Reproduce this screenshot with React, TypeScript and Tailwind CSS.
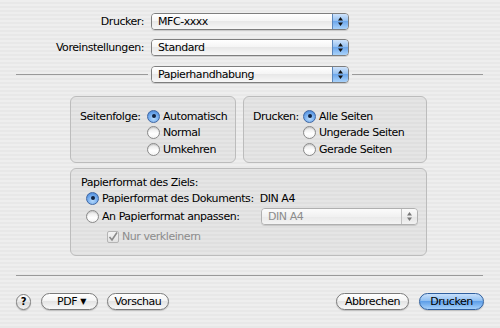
import React from "react";

const Arrows = ({ dim }: { dim?: boolean }) => (
  <svg width="7" height="11" viewBox="0 0 7 11">
    <path d="M3.5 1 L6 4.5 L1 4.5 Z" fill={dim ? "#777" : "#111"} />
    <path d="M3.5 10 L6 6.5 L1 6.5 Z" fill={dim ? "#777" : "#111"} />
  </svg>
);

const Popup = ({ text, w, disabled }: { text: string; w: string; disabled?: boolean }) => (
  <div
    className={`flex h-[17px] ${w} rounded-[4px] border ${
      disabled ? "border-[#b0b0b0]" : "border-[#7e7e7e]"
    } overflow-hidden shadow-[0_1px_0_rgba(0,0,0,0.12)]`}
  >
    <div
      className={`flex-1 flex items-center pl-[6px] ${
        disabled
          ? "text-[#8c8c8c] bg-[linear-gradient(to_bottom,#fbfbfb,#f1f1f1_50%,#e9e9e9_50%,#f4f4f4)]"
          : "text-black bg-[linear-gradient(to_bottom,#ffffff,#f4f4f4_50%,#e8e8e8_50%,#f7f7f7)]"
      }`}
    >
      {text}
    </div>
    <div
      className={`w-[16px] flex items-center justify-center border-l ${
        disabled
          ? "border-[#c0c0c0] bg-[linear-gradient(to_bottom,#fbfbfb,#eeeeee_50%,#e4e4e4_50%,#f2f2f2)]"
          : "border-[#5b86bb] bg-[linear-gradient(to_bottom,#cfe3fb,#8fbdf0_50%,#6ea8ec_50%,#a9d2fa)]"
      }`}
    >
      <Arrows dim={disabled} />
    </div>
  </div>
);

const Radio = ({ on }: { on?: boolean }) =>
  on ? (
    <div className="w-[13px] h-[13px] rounded-full border border-[#3f67a3] bg-[radial-gradient(circle_at_50%_70%,#b6dafc,#6aa4ea_60%,#3d78c9)] flex items-center justify-center shrink-0">
      <div className="w-[4px] h-[4px] rounded-full bg-[#10223f]" />
    </div>
  ) : (
    <div className="w-[13px] h-[13px] rounded-full border border-[#8a8a8a] bg-[linear-gradient(to_bottom,#e4e4e4,#ffffff_60%,#f4f4f4)] shadow-[inset_0_1px_1px_rgba(0,0,0,0.15)] shrink-0" />
  );

const RadioRow = ({ on, label }: { on?: boolean; label: string }) => (
  <div className="flex items-center h-[16.5px] gap-[3px]">
    <Radio on={on} />
    <span>{label}</span>
  </div>
);

const Btn = ({ children, w, blue }: { children: React.ReactNode; w: string; blue?: boolean }) => (
  <div
    className={`h-[17px] ${w} rounded-full border flex items-center justify-center ${
      blue
        ? "border-[#2f5f9e] bg-[linear-gradient(to_bottom,#c8e0fb,#8abcf1_50%,#5f9fe8_50%,#a4d0fb)]"
        : "border-[#7a7a7a] bg-[linear-gradient(to_bottom,#ffffff,#f3f3f3_50%,#e4e4e4_50%,#f8f8f8)]"
    } shadow-[0_1px_1px_rgba(0,0,0,0.18)]`}
  >
    {children}
  </div>
);

export default function App() {
  return (
    <div className="w-[500px] h-[328px] overflow-hidden bg-[repeating-linear-gradient(to_bottom,#eeeeee_0px,#eeeeee_2px,#e8e8e8_2px,#e8e8e8_4px)] font-['DejaVu_Sans',sans-serif] text-[11px] tracking-[-0.45px] text-black leading-none flex flex-col">
      <div className="pt-[13px] flex flex-col">
        <div className="flex items-center h-[17px]">
          <div className="w-[144px] text-right">Drucker:</div>
          <div className="ml-[7px]">
            <Popup text="MFC-xxxx" w="w-[198px]" />
          </div>
        </div>
        <div className="flex items-center h-[17px] mt-[9px]">
          <div className="w-[144px] text-right">Voreinstellungen:</div>
          <div className="ml-[7px]">
            <Popup text="Standard" w="w-[198px]" />
          </div>
        </div>
        <div className="flex items-center h-[17px] mt-[10px]">
          <div className="ml-[16px] w-[132px] h-px bg-[#9a9a9a]" />
          <div className="ml-[3px]">
            <Popup text="Papierhandhabung" w="w-[198px]" />
          </div>
          <div className="ml-[3px] w-[131px] h-px bg-[#9a9a9a]" />
        </div>
      </div>

      <div className="mt-[13px] ml-[70px] flex gap-[7px]">
        <div className="w-[166px] h-[67px] rounded-[6px] border border-[#bcbcbc] bg-black/[0.035] pl-[9px] pt-[11px] flex">
          <div className="w-[67px] h-[16.5px] flex items-center">Seitenfolge:</div>
          <div className="flex flex-col">
            <RadioRow on label="Automatisch" />
            <RadioRow label="Normal" />
            <RadioRow label="Umkehren" />
          </div>
        </div>
        <div className="w-[184px] h-[67px] rounded-[6px] border border-[#bcbcbc] bg-black/[0.035] pl-[9px] pt-[11px] flex">
          <div className="w-[50px] h-[16.5px] flex items-center">Drucken:</div>
          <div className="flex flex-col">
            <RadioRow on label="Alle Seiten" />
            <RadioRow label="Ungerade Seiten" />
            <RadioRow label="Gerade Seiten" />
          </div>
        </div>
      </div>

      <div className="mt-[5px] ml-[70px] w-[357px] h-[88px] rounded-[6px] border border-[#bcbcbc] bg-black/[0.035] pl-[10px] pt-[5px] flex flex-col">
        <div className="h-[16px] flex items-center">Papierformat des Ziels:</div>
        <div className="h-[16px] flex items-center ml-[5px] gap-[3px]">
          <Radio on />
          <span>Papierformat des Dokuments:&nbsp; DIN A4</span>
        </div>
        <div className="h-[17px] mt-[2px] flex items-center ml-[5px]">
          <div className="w-[175px] flex items-center gap-[3px]">
            <Radio />
            <span>An Papierformat anpassen:</span>
          </div>
          <Popup text="DIN A4" w="w-[157px]" disabled />
        </div>
        <div className="h-[16px] mt-[3.5px] flex items-center ml-[26px] gap-[3px] text-[#8c8c8c]">
          <div className="w-[12px] h-[12px] rounded-[2px] border border-[#b4b4b4] bg-[linear-gradient(to_bottom,#f4f4f4,#e2e2e2)] flex items-center justify-center">
            <svg width="10" height="10" viewBox="0 0 10 10">
              <path d="M1.5 5 L4 8 L9 0.5" stroke="#8a8a8a" strokeWidth="1.6" fill="none" />
            </svg>
          </div>
          <span>Nur verkleinern</span>
        </div>
      </div>

      <div className="mt-[19px] ml-[16px] w-[467px] h-px bg-[#9a9a9a]" />

      <div className="mt-[17px] flex items-center px-[16px]">
        <div className="w-[15px] h-[16px] rounded-full border border-[#7d7d7d] bg-[linear-gradient(to_bottom,#ffffff,#e6e6e6_50%,#d8d8d8_50%,#f2f2f2)] flex items-center justify-center font-bold text-[10px] shadow-[0_1px_1px_rgba(0,0,0,0.2)]">
          ?
        </div>
        <div className="ml-[10px]">
          <Btn w="w-[57px]">
            <span className="pl-[4px]">PDF</span>
            <span className="ml-[3px] text-[8px]">▼</span>
          </Btn>
        </div>
        <div className="ml-[9px]">
          <Btn w="w-[62px]">Vorschau</Btn>
        </div>
        <div className="ml-auto">
          <Btn w="w-[73px]">Abbrechen</Btn>
        </div>
        <div className="ml-[10px]">
          <Btn w="w-[65px]" blue>
            Drucken
          </Btn>
        </div>
      </div>
    </div>
  );
}
